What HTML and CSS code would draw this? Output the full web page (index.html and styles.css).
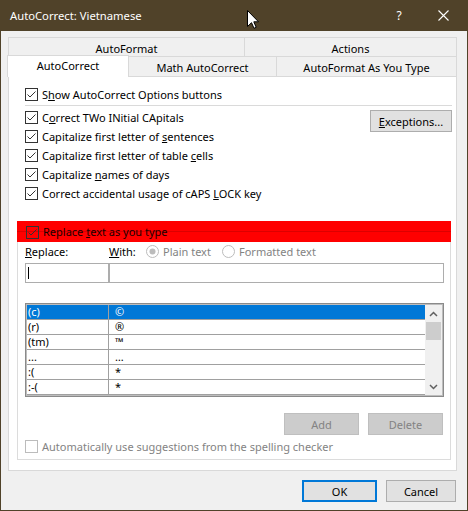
FILE: index.html
```html
<!DOCTYPE html>
<html>
<head>
<meta charset="utf-8">
<title>AutoCorrect: Vietnamese</title>
<link rel="stylesheet" href="styles.css">
</head>
<body>
<div class="window">
  <div class="titlebar">
    <span class="title">AutoCorrect: Vietnamese</span>
    <span class="cap help">?</span>
    <span class="cap close"><svg width="11" height="11" viewBox="0 0 11 11"><path d="M0.5 0.5 L10.5 10.5 M10.5 0.5 L0.5 10.5" stroke="#fff" stroke-width="1.1" fill="none"/></svg></span>
  </div>
  <div class="client">
    <div class="tabs">
      <div class="tabrow r1">
        <div class="tab w-af">AutoFormat</div>
        <div class="tab w-act last">Actions</div>
      </div>
      <div class="tabrow r2">
        <div class="tab sel">AutoCorrect</div>
        <div class="tab w-math">Math AutoCorrect</div>
        <div class="tab w-afyt last">AutoFormat As You Type</div>
      </div>
    </div>
    <div class="panel">
      <div class="checks">
        <div class="row"><svg class="cb" width="13" height="13" viewBox="0 0 13 13"><rect x="0.5" y="0.5" width="12" height="12" fill="#fff" stroke="#333"/><path d="M2.5 6.5 L5 9 L10.5 3.5" fill="none" stroke="#333"/></svg><span>S<u>h</u>ow AutoCorrect Options buttons</span></div>
        <div class="sep"></div>
        <div class="checks2">
          <div class="col">
            <div class="row"><svg class="cb" width="13" height="13" viewBox="0 0 13 13"><rect x="0.5" y="0.5" width="12" height="12" fill="#fff" stroke="#333"/><path d="M2.5 6.5 L5 9 L10.5 3.5" fill="none" stroke="#333"/></svg><span>C<u>o</u>rrect TWo INitial CApitals</span></div>
            <div class="row"><svg class="cb" width="13" height="13" viewBox="0 0 13 13"><rect x="0.5" y="0.5" width="12" height="12" fill="#fff" stroke="#333"/><path d="M2.5 6.5 L5 9 L10.5 3.5" fill="none" stroke="#333"/></svg><span>Capitalize first letter of <u>s</u>entences</span></div>
            <div class="row"><svg class="cb" width="13" height="13" viewBox="0 0 13 13"><rect x="0.5" y="0.5" width="12" height="12" fill="#fff" stroke="#333"/><path d="M2.5 6.5 L5 9 L10.5 3.5" fill="none" stroke="#333"/></svg><span>Capitalize first letter of table <u>c</u>ells</span></div>
            <div class="row"><svg class="cb" width="13" height="13" viewBox="0 0 13 13"><rect x="0.5" y="0.5" width="12" height="12" fill="#fff" stroke="#333"/><path d="M2.5 6.5 L5 9 L10.5 3.5" fill="none" stroke="#333"/></svg><span>Capitalize <u>n</u>ames of days</span></div>
            <div class="row"><svg class="cb" width="13" height="13" viewBox="0 0 13 13"><rect x="0.5" y="0.5" width="12" height="12" fill="#fff" stroke="#333"/><path d="M2.5 6.5 L5 9 L10.5 3.5" fill="none" stroke="#333"/></svg><span>Correct accidental usage of cAPS <u>L</u>OCK key</span></div>
          </div>
          <div class="btn exc"><span><u>E</u>xceptions...</span></div>
        </div>
      </div>

      <div class="group">
        <div class="ghead"><svg class="cb cbh" width="13" height="13" viewBox="0 0 13 13"><rect x="0.5" y="0.5" width="12" height="12" fill="none" stroke="#333"/><path d="M2.5 6.5 L5 9 L10.5 3.5" fill="none" stroke="#333"/></svg><span>Replace <u>t</u>ext as you type</span></div>
        <div class="gbody">
          <div class="labels">
            <span class="l-rep"><u>R</u>eplace:</span>
            <span class="l-with"><u>W</u>ith:</span>
            <span class="opt opt1"><svg class="rd" width="13" height="13" viewBox="0 0 13 13"><circle cx="6.5" cy="6.5" r="6" fill="#fff" stroke="#bcbcbc"/><circle cx="6.5" cy="6.5" r="3" fill="#bcbcbc"/></svg><span>Plain text</span></span>
            <span class="opt"><svg class="rd" width="13" height="13" viewBox="0 0 13 13"><circle cx="6.5" cy="6.5" r="6" fill="#fff" stroke="#bcbcbc"/></svg><span>Formatted text</span></span>
          </div>
          <div class="inputs">
            <div class="inp inp-rep"><span class="caret"></span></div>
            <div class="inp inp-with"></div>
          </div>
          <div class="list">
            <div class="lrows">
              <div class="lrow on"><span class="c1">(c)</span><span class="c2">©</span></div>
              <div class="lrow"><span class="c1">(r)</span><span class="c2">®</span></div>
              <div class="lrow"><span class="c1">(tm)</span><span class="c2">™</span></div>
              <div class="lrow"><span class="c1">...</span><span class="c2">…</span></div>
              <div class="lrow"><span class="c1">:(</span><span class="c2">*</span></div>
              <div class="lrow"><span class="c1">:-(</span><span class="c2">*</span></div>
            </div>
            <div class="sb">
              <div class="sb-btn"><svg width="9" height="6" viewBox="0 0 9 6"><path d="M1 5 L4.5 1.5 L8 5" fill="none" stroke="#606060" stroke-width="1.5"/></svg></div>
              <div class="thumb"></div>
              <div class="sb-sp"></div>
              <div class="sb-btn"><svg width="9" height="6" viewBox="0 0 9 6"><path d="M1 1 L4.5 4.5 L8 1" fill="none" stroke="#606060" stroke-width="1.5"/></svg></div>
            </div>
          </div>
          <div class="btns">
            <div class="btn dis w75">Add</div>
            <div class="btn dis w75">Delete</div>
          </div>
          <div class="row auto"><svg class="cb" width="13" height="13" viewBox="0 0 13 13"><rect x="0.5" y="0.5" width="12" height="12" fill="#fff" stroke="#bcbcbc"/></svg><span>Automatically use suggestions from the spelling checker</span></div>
        </div>
      </div>
    </div>
    <div class="footer">
      <div class="btn ok">OK</div>
      <div class="btn cancel">Cancel</div>
    </div>
  </div>
  <svg class="cursor" width="12" height="19" viewBox="0 0 12 19"><path d="M0.5 0.5 L0.5 16.5 L4.5 12.7 L7 18.3 L9.2 17.3 L6.8 11.8 L11.5 11.8 Z" fill="#fff" stroke="#000" stroke-linejoin="miter"/></svg>
</div>
</body>
</html>
```

FILE: styles.css
```css
* { box-sizing: border-box; }
html, body { margin: 0; padding: 0; background: #f0f0f0; }
body {
  font-family: "Noto Sans", "Liberation Sans", sans-serif;
  font-size: 11px;
  line-height: 15px;
  color: #000;
}
u { text-underline-offset: 1px; }

.window {
  position: relative;
  width: 468px;
  height: 511px;
  background: #f0f0f0;
  border: 1px solid #504229;
  border-top: 0;
  display: flex;
  flex-direction: column;
  overflow: hidden;
}

.titlebar {
  flex: none;
  height: 31px;
  margin: 0 -1px;
  background: #504229;
  color: #fff;
  display: flex;
  align-items: center;
}
.title { flex: 1; padding-left: 10px; font-size: 11.25px; }
.cap { width: 46px; height: 31px; display: flex; align-items: center; justify-content: center; }
.help { font-size: 12px; }
.close { padding-right: 3px; }

.client {
  flex: 1;
  display: flex;
  flex-direction: column;
  padding: 6px 10px 0 7px;
}

.tabrow { display: flex; }
.r1 { height: 19px; }
.r2 { height: 20px; }
.tab {
  border-top: 1px solid #d9d9d9;
  border-left: 1px solid #d9d9d9;
  background: #f0f0f0;
  text-align: center;
  padding-top: 3px;
  white-space: nowrap;
}
.tab.last { border-right: 1px solid #d9d9d9; }
.w-af { width: 236px; }
.w-act { width: 213px; }
.w-math { width: 148px; }
.w-afyt { width: 181px; }
.sel {
  position: relative;
  z-index: 1;
  width: 122px;
  height: 22px;
  margin: -1px -1px 0 -1px;
  border-right: 1px solid #d9d9d9;
  background: #fff;
  padding-top: 2px;
}

.panel {
  height: 395px;
  border: 1px solid #d9d9d9;
  background: #fff;
  padding: 8px 4px 0 8px;
}

.checks { margin-left: 8px; }
.row {
  height: 19px;
  display: flex;
  align-items: center;
  gap: 4px;
  white-space: nowrap;
}
.cb, .rd { flex: none; display: block; }
.sep { height: 1px; background: #dadada; margin: 1px 0 2px; }
.checks2 { display: flex; justify-content: space-between; align-items: flex-start; }

.btn {
  display: flex;
  align-items: center;
  justify-content: center;
  height: 22px;
  background: #e1e1e1;
  border: 1px solid #adadad;
  white-space: nowrap;
}
.exc { width: 82px; margin-top: 2px; }

.group { margin: 18px 1px 0 0; }
.ghead {
  height: 21px;
  display: flex;
  align-items: center;
  gap: 4px;
  padding-left: 9px;
  background: linear-gradient(#ff0000 0 10px, #dc0000 10px 11px, #ff0000 11px);
  color: #1a0000;
}
.cbh { margin-top: 2px; }
.gbody {
  border: 1px solid #dcdcdc;
  border-top: 0;
  padding: 1px 6px 3px 7px;
}
.labels { height: 17px; display: flex; align-items: center; white-space: nowrap; }
.l-rep { width: 84px; }
.l-with { width: 37px; }
.opt { display: flex; align-items: center; gap: 4px; color: #838383; }
.opt1 { width: 76px; }

.inputs { display: flex; height: 20px; margin-top: 3px; }
.inp { height: 20px; border: 1px solid #adadad; background: #fff; }
.inp-rep { width: 84px; padding: 3px 0 0 2px; }
.inp-with { flex: 1; }
.caret { display: block; width: 1px; height: 12px; background: #000; }

.list {
  margin-top: 20px;
  height: 94px;
  border: 1px solid #8a8a8a;
  padding: 1px;
  box-shadow: inset 0 0 0 1px #bdbdbd;
  display: flex;
  background: #fff;
}
.lrows { flex: 1; }
.lrow {
  height: 15px;
  display: flex;
  border-bottom: 1px solid #a0a0a0;
  line-height: 14px;
  white-space: nowrap;
}
.lrow .c1 { width: 82px; border-right: 1px solid #a0a0a0; padding-left: 1px; }
.lrow .c2 { padding-left: 6px; }
.lrow.on { background: #0078d7; color: #fff; }
.sb { width: 17px; background: #f0f0f0; display: flex; flex-direction: column; }
.sb-btn { height: 17px; display: flex; align-items: center; justify-content: center; }
.thumb { height: 18px; margin: 0 1px; background: #cdcdcd; }
.sb-sp { flex: 1; }

.btns { display: flex; justify-content: flex-end; gap: 9px; margin: 16px 1px 0 0; }
.w75 { width: 75px; }
.dis { background: #cccccc; border-color: #bfbfbf; color: #838383; }
.auto { margin-top: 2px; color: #838383; }

.footer { display: flex; justify-content: flex-end; gap: 9px; margin: 9px 1px 0 0; }
.ok { width: 75px; border: 2px solid #0078d7; }
.cancel { width: 70px; }

.cursor { position: absolute; left: 246px; top: 10px; }
```
